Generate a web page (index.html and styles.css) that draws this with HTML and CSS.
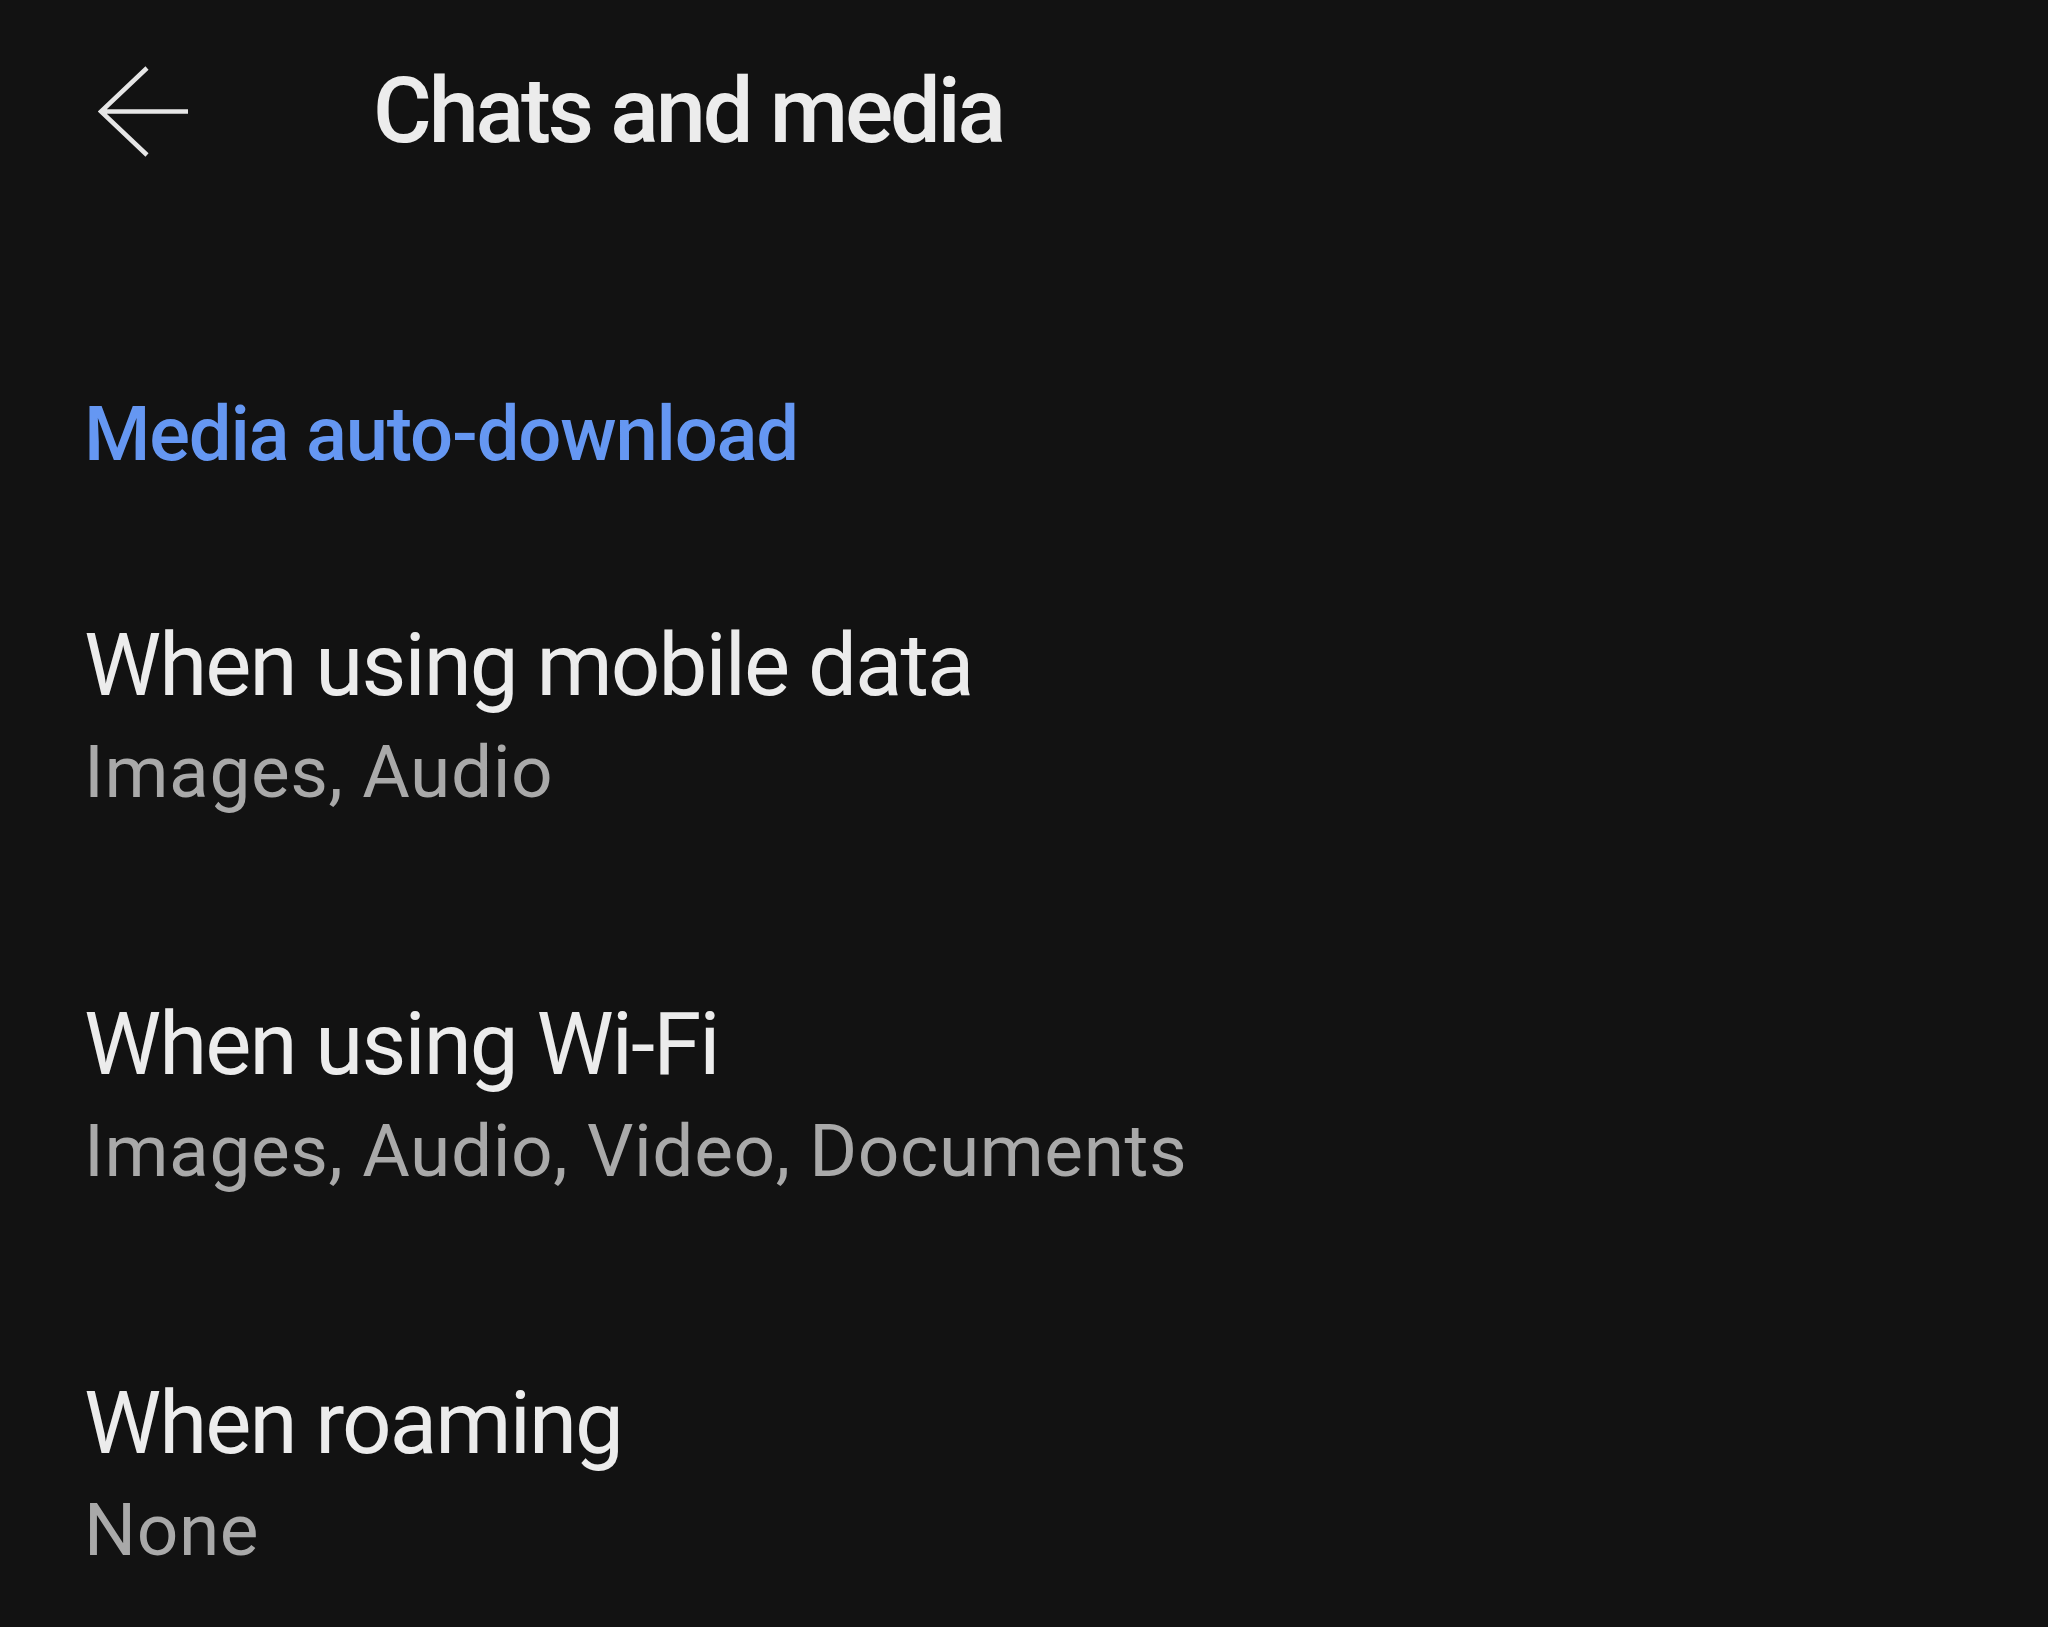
FILE: index.html
```html
<!DOCTYPE html>
<html lang="en">
<head>
<meta charset="utf-8">
<title>Chats and media</title>
<link rel="stylesheet" href="styles.css">
</head>
<body>
<div class="screen">
  <header class="topbar">
    <svg class="back" width="92" height="92" viewBox="0 0 92 92" aria-hidden="true">
      <path d="M49 2 L3 45.5 L49 89 M3 45.5 L90 45.5" fill="none" stroke="#e6e6e6" stroke-width="4.5" stroke-linejoin="miter" stroke-linecap="butt"/>
    </svg>
    <h1 class="title">Chats and media</h1>
  </header>
  <section class="section">
    <h2 class="section-title">Media auto-download</h2>
    <div class="list">
      <div class="item">
        <div class="item-title">When using mobile data</div>
        <div class="item-sub">Images, Audio</div>
      </div>
      <div class="item">
        <div class="item-title">When using Wi-Fi</div>
        <div class="item-sub">Images, Audio, Video, Documents</div>
      </div>
      <div class="item">
        <div class="item-title">When roaming</div>
        <div class="item-sub">None</div>
      </div>
    </div>
  </section>
</div>
</body>
</html>
```
FILE: styles.css
```css
html, body {
  margin: 0;
  padding: 0;
  background: #121212;
}
body {
  font-family: Roboto, "Noto Sans", "Liberation Sans", sans-serif;
  color: #ececec;
  width: 2048px;
  height: 1627px;
  overflow: hidden;
}
.screen {
  display: flex;
  flex-direction: column;
}
.topbar {
  display: flex;
  align-items: flex-start;
  padding: 62px 0 0 98px;
}
.back {
  display: block;
  margin-top: 4px;
  flex: none;
}
.title {
  margin: 0 0 0 183px;
  font-size: 90px;
  font-weight: 500;
  line-height: 100px;
  letter-spacing: -3.1px;
  color: #ececec;
}
.section {
  display: flex;
  flex-direction: column;
  padding: 227px 0 0 84px;
}
.section-title {
  margin: 0;
  font-size: 76px;
  font-weight: 500;
  line-height: 90px;
  letter-spacing: -1.2px;
  color: #6597f2;
}
.list {
  display: flex;
  flex-direction: column;
  gap: 177px;
  margin-top: 136px;
}
.item {
  display: flex;
  flex-direction: column;
}
.item-title {
  font-size: 87px;
  font-weight: 400;
  line-height: 100px;
  letter-spacing: -1.9px;
  color: #ececec;
}
.item-sub {
  margin-top: 12px;
  font-size: 73px;
  font-weight: 400;
  line-height: 90px;
  letter-spacing: 0.6px;
  color: #a9a9a9;
}
```
